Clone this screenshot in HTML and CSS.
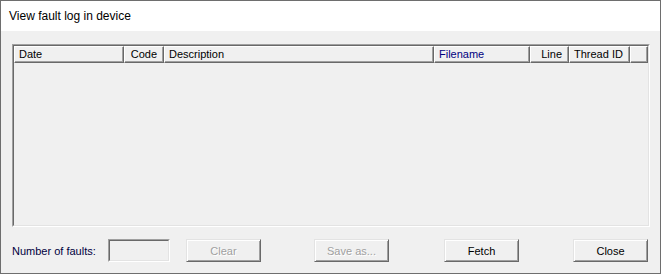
FILE: index.html
```html
<!DOCTYPE html>
<html>
<head>
<meta charset="utf-8">
<title>View fault log in device</title>
<link rel="stylesheet" href="styles.css">
</head>
<body>
<div class="window">
  <div class="titlebar">View fault log in device</div>
  <div class="client">
    <div class="list">
      <div class="list-inner">
        <div class="header">
          <div class="hcell c-date">Date</div>
          <div class="hcell c-code right">Code</div>
          <div class="hcell c-desc">Description</div>
          <div class="hcell c-file navy">Filename</div>
          <div class="hcell c-line right">Line</div>
          <div class="hcell c-thread">Thread ID</div>
          <div class="hcell c-fill"></div>
        </div>
      </div>
    </div>
    <div class="bottom">
      <span class="label">Number of faults:</span>
      <div class="textbox"><div class="textbox-inner"></div></div>
      <button class="btn btn-clear" disabled>Clear</button>
      <button class="btn btn-save" disabled>Save as...</button>
      <button class="btn btn-fetch">Fetch</button>
      <button class="btn btn-close">Close</button>
    </div>
  </div>
</div>
</body>
</html>
```

FILE: styles.css
```css
html, body {
  margin: 0;
  padding: 0;
  background: #f0f0f0;
}

.window {
  box-sizing: border-box;
  width: 661px;
  height: 274px;
  border: 1px solid #6e6e6e;
  display: flex;
  flex-direction: column;
  font-family: "Liberation Sans", Arial, sans-serif;
  font-size: 11px;
  color: #000;
}

.titlebar {
  height: 30px;
  line-height: 30px;
  background: #fff;
  padding-left: 8px;
  font-size: 12px;
  color: #000;
}

.client {
  flex: 1;
  background: #f0f0f0;
  padding: 13px 10px 11px 11px;
  display: flex;
  flex-direction: column;
}

.list {
  height: 183px;
  box-sizing: border-box;
  border: 1px solid;
  border-color: #a0a0a0 #fff #fff #a0a0a0;
}

.list-inner {
  height: 100%;
  box-sizing: border-box;
  border: 1px solid;
  border-color: #696969 #e3e3e3 #e3e3e3 #696969;
  background: #f0f0f0;
}

.header {
  display: flex;
  height: 17px;
}

.hcell {
  box-sizing: border-box;
  height: 17px;
  line-height: 15px;
  border-top: 1px solid #fff;
  border-left: 1px solid #fff;
  border-right: 1px solid #696969;
  border-bottom: 1px solid #696969;
  box-shadow: inset -1px -1px 0 #a0a0a0;
  padding: 0 5px 0 4px;
  white-space: nowrap;
  overflow: hidden;
}

.hcell.right {
  text-align: right;
  padding: 0 6px 0 4px;
}

.navy { color: #000080; }

.c-date { width: 110px; }
.c-code { width: 40px; }
.c-desc { width: 270px; }
.c-file { width: 96px; }
.c-line { width: 39px; }
.c-thread { width: 61px; }
.c-fill { flex: 1; }

.bottom {
  margin-top: 12px;
  height: 23px;
  display: flex;
  align-items: center;
}

.label {
  width: 96px;
  color: #000040;
}

.textbox {
  box-sizing: border-box;
  width: 62px;
  height: 23px;
  border: 1px solid;
  border-color: #a0a0a0 #fff #fff #a0a0a0;
}

.textbox-inner {
  box-sizing: border-box;
  height: 100%;
  border: 1px solid;
  border-color: #696969 #e3e3e3 #e3e3e3 #696969;
  background: #f0f0f0;
}

.btn {
  box-sizing: border-box;
  width: 75px;
  height: 23px;
  padding: 0;
  margin: 0;
  font-family: "Liberation Sans", Arial, sans-serif;
  font-size: 11px;
  color: #000;
  background: #f0f0f0;
  border: 1px solid;
  border-color: #e3e3e3 #696969 #696969 #e3e3e3;
  box-shadow: inset 1px 1px 0 #fff, inset -1px -1px 0 #a0a0a0;
  border-radius: 0;
  outline: none;
}

.btn:disabled {
  color: #a0a0a0;
  text-shadow: 1px 1px 0 #fff;
}

.btn-clear { margin-left: 16px; }
.btn-save { margin-left: 53px; }
.btn-fetch { margin-left: 55px; }
.btn-close { margin-left: 54px; }
```
